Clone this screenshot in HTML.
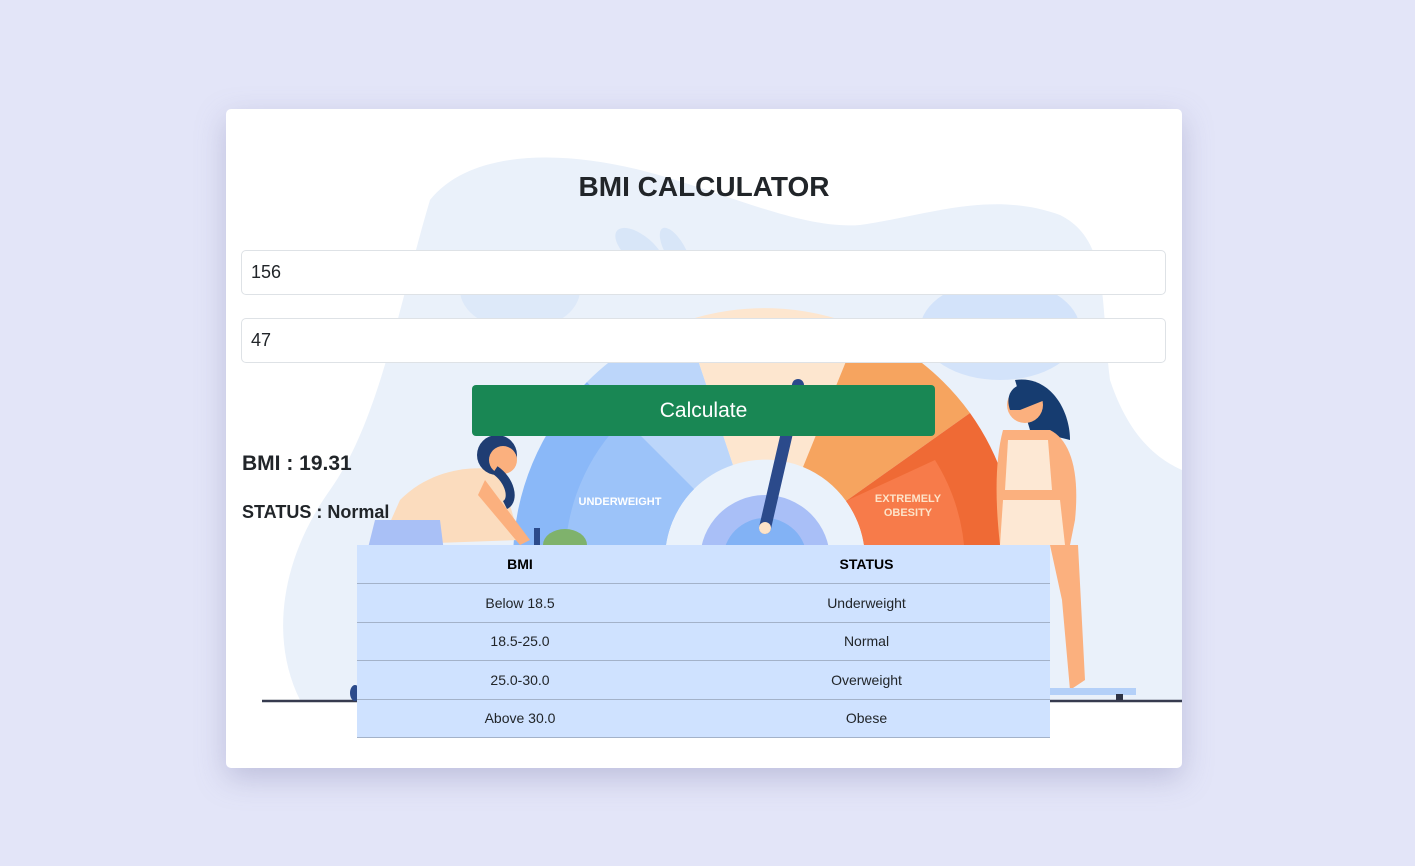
<!DOCTYPE html>
<html><head><meta charset="utf-8"><style>
*{box-sizing:border-box;margin:0;padding:0}
body{width:1415px;height:866px;background:#e3e5f8;font-family:"Liberation Sans",sans-serif;position:relative;overflow:hidden}
.card{position:absolute;left:226px;top:109px;width:956px;height:659px;background:#fff;border-radius:5px;box-shadow:0 10px 30px rgba(120,120,170,.35);overflow:hidden}
svg.bg{position:absolute;left:0;top:0}
.abs{position:absolute}
h1{position:absolute;left:0;width:956px;top:62px;text-align:center;font-size:28px;font-weight:bold;color:#212529;letter-spacing:0}
.inp{position:absolute;left:15px;width:925px;height:45px;border:1px solid #dee2e6;border-radius:5px;background:#fff;font-size:18px;color:#212529;padding:11px 9px}
.btn{position:absolute;left:246px;top:276px;width:463px;height:51px;background:#198754;border-radius:4px;color:#fff;font-size:21px;text-align:center;line-height:51px}
table{position:absolute;left:131px;top:436px;width:693px;border-collapse:collapse;background:#cfe2ff;font-size:14px;color:#212529;table-layout:fixed}
td,th{height:38.5px;text-align:center;border-bottom:1px solid #a3b2c9}
th{font-weight:bold;font-size:14px;color:#000}
</style></head><body>
<div class="card">
<svg class="bg" width="956" height="659" viewBox="226 109 956 659">
<path d="M430 200 C470 150 560 150 640 170 C720 190 800 230 860 225 C930 215 990 190 1060 215 C1110 240 1100 300 1110 380 C1130 440 1160 460 1182 470 L1182 700 L300 700 C270 640 280 560 330 490 C380 420 400 300 430 200 Z" fill="#eaf1fa"/>
<ellipse cx="640" cy="250" rx="30" ry="14" fill="#d8e6f8" transform="rotate(40 640 250)"/>
<ellipse cx="675" cy="250" rx="25" ry="10" fill="#d8e6f8" transform="rotate(60 675 250)"/>
<ellipse cx="1000" cy="330" rx="80" ry="50" fill="#d3e3fa"/>
<ellipse cx="520" cy="290" rx="60" ry="40" fill="#dde9f9"/>
<g transform="translate(765 560)">
<path d="M-252 0 A252 252 0 0 1 -178 -178 L-71 -71 A100 100 0 0 0 -100 0 Z" fill="#8ab8f8"/>
<path d="M-178 -178 A252 252 0 0 1 -80 -239 L-32 -95 A100 100 0 0 0 -71 -71 Z" fill="#bcd6fa"/>
<path d="M-200 0 A200 200 0 0 1 -141 -141 L-71 -71 A100 100 0 0 0 -100 0 Z" fill="#9cc3f9"/>
<path d="M-80 -239 A252 252 0 0 1 95 -233 L38 -93 A100 100 0 0 0 -32 -95 Z" fill="#fde6cf"/>
<path d="M95 -233 A252 252 0 0 1 205 -147 L81 -59 A100 100 0 0 0 38 -93 Z" fill="#f6a45f"/>
<path d="M205 -147 A252 252 0 0 1 252 0 L100 0 A100 100 0 0 0 81 -59 Z" fill="#ef6a35"/>
<path d="M170 -100 A200 200 0 0 1 200 0 L100 0 A100 100 0 0 0 81 -59 Z" fill="#f77b4a"/>
<circle r="100" fill="#eaf2fb"/>
<circle r="65" fill="#a9bff7"/>
<circle r="42" fill="#82b2f5"/>
</g>
<line x1="765" y1="528" x2="798" y2="385" stroke="#2b4a8b" stroke-width="12" stroke-linecap="round"/>
<circle cx="765" cy="528" r="6" fill="#fde3c8"/>
<text x="620" y="505" font-size="11" font-weight="bold" fill="#fff" text-anchor="middle" font-family="Liberation Sans">UNDERWEIGHT</text>
<text x="908" y="502" font-size="11" font-weight="bold" fill="#fde3c8" text-anchor="middle" font-family="Liberation Sans">EXTREMELY</text>
<text x="908" y="516" font-size="11" font-weight="bold" fill="#fde3c8" text-anchor="middle" font-family="Liberation Sans">OBESITY</text>
<path d="M400 500 C430 470 470 465 500 470 L520 540 L380 545 Z" fill="#fbdcbe"/>
<path d="M375 520 L440 520 L445 560 L365 560 Z" fill="#a9c0f6"/>
<path d="M485 480 L530 540 L520 545 L478 495 Z" fill="#fbb07e"/>
<circle cx="497" cy="455" r="20" fill="#1f3d73"/>
<circle cx="503" cy="460" r="14" fill="#fbb07e"/>
<path d="M495 470 C510 480 515 500 505 505" stroke="#1f3d73" stroke-width="9" fill="none"/>
<ellipse cx="565" cy="545" rx="22" ry="16" fill="#7fb26c"/>
<rect x="534" y="528" width="6" height="20" fill="#2b4a8b"/>
<path d="M1015 380 C1050 375 1070 410 1070 440 L1030 430 Z" fill="#163c70"/>
<circle cx="1025" cy="405" r="18" fill="#fbb07e"/>
<path d="M1010 410 C1000 380 1040 375 1045 400 L1020 410 Z" fill="#163c70"/>
<path d="M1003 430 L1050 430 C1070 440 1080 470 1075 520 L1070 545 L1000 545 C995 500 995 460 1003 430 Z" fill="#fbb07e"/>
<path d="M1008 440 L1048 440 L1052 490 L1005 490 Z" fill="#fde8d4"/>
<path d="M1003 500 L1060 500 L1065 545 L1000 545 Z" fill="#fde8d4"/>
<path d="M1050 545 L1078 545 L1085 680 L1070 690 L1062 600 Z" fill="#fbb07e"/>
<rect x="1050" y="688" width="86" height="7" fill="#b4d0f8"/>
<rect x="1116" y="694" width="7" height="6" fill="#2d3345"/>
<line x1="262" y1="701" x2="1182" y2="701" stroke="#363b4f" stroke-width="2.5"/>
<ellipse cx="355" cy="693" rx="5" ry="8" fill="#2b4a8b"/>
</svg>
<h1>BMI CALCULATOR</h1>
<div class="inp" style="top:141px">156</div>
<div class="inp" style="top:209px">47</div>
<div class="btn">Calculate</div>
<div class="abs" style="left:16px;top:343px;font-size:21px;font-weight:bold;color:#212529">BMI : 19.31</div>
<div class="abs" style="left:16px;top:393px;font-size:18px;font-weight:bold;color:#212529">STATUS : Normal</div>
<table>
<colgroup><col style="width:326px"><col style="width:367px"></colgroup>
<tr><th>BMI</th><th>STATUS</th></tr>
<tr><td>Below 18.5</td><td>Underweight</td></tr>
<tr><td>18.5-25.0</td><td>Normal</td></tr>
<tr><td>25.0-30.0</td><td>Overweight</td></tr>
<tr><td>Above 30.0</td><td>Obese</td></tr>
</table>
</div>
</body></html>
